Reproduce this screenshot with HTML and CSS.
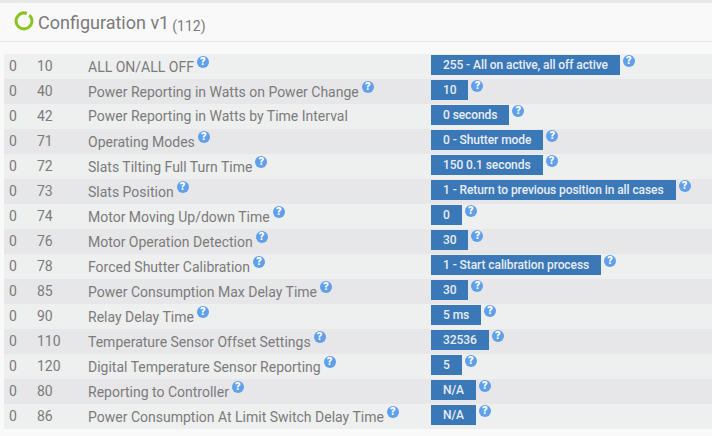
FILE: index.html
```html
<!DOCTYPE html>
<html lang="en">
<head>
    <meta charset="UTF-8">
    <meta name="viewport" content="width=device-width, initial-scale=1.0">
    <title>Configuration v1</title>
    <link rel="stylesheet" href="styles.css">
</head>
<body>
    <div class="topbar"></div>
    <div class="header">
        <svg class="ring" width="20" height="20" viewBox="0 0 20 20">
            <circle cx="10" cy="10" r="8" fill="none" stroke="#8cc320" stroke-width="3" stroke-dasharray="47 3.3" transform="rotate(-48 10 10)"/>
        </svg>
        <h1 class="title">Configuration v1</h1>
        <small class="count">(112)</small>
    </div>

    <table class="params">
        <tr><td class="c-ep">0</td><td class="c-id">10</td><td class="c-name">ALL ON/ALL OFF<span class="help">?</span></td><td class="c-val"><span class="badge">255 - All on active, all off active</span><span class="help">?</span></td></tr>
        <tr><td class="c-ep">0</td><td class="c-id">40</td><td class="c-name">Power Reporting in Watts on Power Change<span class="help">?</span></td><td class="c-val"><span class="badge">10</span><span class="help">?</span></td></tr>
        <tr><td class="c-ep">0</td><td class="c-id">42</td><td class="c-name">Power Reporting in Watts by Time Interval</td><td class="c-val"><span class="badge">0 seconds</span><span class="help">?</span></td></tr>
        <tr><td class="c-ep">0</td><td class="c-id">71</td><td class="c-name">Operating Modes<span class="help">?</span></td><td class="c-val"><span class="badge">0 - Shutter mode</span><span class="help">?</span></td></tr>
        <tr><td class="c-ep">0</td><td class="c-id">72</td><td class="c-name">Slats Tilting Full Turn Time<span class="help">?</span></td><td class="c-val"><span class="badge">150 0.1 seconds</span><span class="help">?</span></td></tr>
        <tr><td class="c-ep">0</td><td class="c-id">73</td><td class="c-name">Slats Position<span class="help">?</span></td><td class="c-val"><span class="badge">1 - Return to previous position in all cases</span><span class="help">?</span></td></tr>
        <tr><td class="c-ep">0</td><td class="c-id">74</td><td class="c-name">Motor Moving Up/down Time<span class="help">?</span></td><td class="c-val"><span class="badge">0</span><span class="help">?</span></td></tr>
        <tr><td class="c-ep">0</td><td class="c-id">76</td><td class="c-name">Motor Operation Detection<span class="help">?</span></td><td class="c-val"><span class="badge">30</span><span class="help">?</span></td></tr>
        <tr><td class="c-ep">0</td><td class="c-id">78</td><td class="c-name">Forced Shutter Calibration<span class="help">?</span></td><td class="c-val"><span class="badge">1 - Start calibration process</span><span class="help">?</span></td></tr>
        <tr><td class="c-ep">0</td><td class="c-id">85</td><td class="c-name">Power Consumption Max Delay Time<span class="help">?</span></td><td class="c-val"><span class="badge">30</span><span class="help">?</span></td></tr>
        <tr><td class="c-ep">0</td><td class="c-id">90</td><td class="c-name">Relay Delay Time<span class="help">?</span></td><td class="c-val"><span class="badge">5 ms</span><span class="help">?</span></td></tr>
        <tr><td class="c-ep">0</td><td class="c-id">110</td><td class="c-name">Temperature Sensor Offset Settings<span class="help">?</span></td><td class="c-val"><span class="badge">32536</span><span class="help">?</span></td></tr>
        <tr><td class="c-ep">0</td><td class="c-id">120</td><td class="c-name">Digital Temperature Sensor Reporting<span class="help">?</span></td><td class="c-val"><span class="badge">5</span><span class="help">?</span></td></tr>
        <tr><td class="c-ep">0</td><td class="c-id">80</td><td class="c-name">Reporting to Controller<span class="help">?</span></td><td class="c-val"><span class="badge">N/A</span><span class="help">?</span></td></tr>
        <tr><td class="c-ep">0</td><td class="c-id">86</td><td class="c-name">Power Consumption At Limit Switch Delay Time<span class="help">?</span></td><td class="c-val"><span class="badge">N/A</span><span class="help">?</span></td></tr>
    </table>
</body>
</html>
```

FILE: styles.css
```css
body {
    margin: 0;
    background-color: #f9f9f9;
    font-family: Roboto, "Liberation Sans", sans-serif;
    color: #7b7b7b;
    overflow: hidden;
}
.topbar {
    height: 3px;
    background-color: #e8e8e8;
}
.header {
    display: flex;
    align-items: center;
    height: 36px;
    padding: 0 0 2px 14px;
    border-bottom: 1px solid #e5e5e5;
}
.ring {
    margin-right: 4px;
}
.title {
    margin: 2px 0 0;
    font-size: 18px;
    font-weight: 400;
    color: #7b7b7b;
}
.count {
    margin: 10px 0 0 3px;
    font-size: 14px;
    color: #7b7b7b;
}
.params {
    width: 708px;
    margin: 12px 0 0 4px;
    border-collapse: collapse;
    font-size: 14px;
}
.params tr {
    height: 25px;
}
.params tr:nth-child(odd) {
    background-color: #eeefef;
}
.params tr:nth-child(even) {
    background-color: #e7e7e9;
}
.params td {
    padding: 0 0 2px;
    white-space: nowrap;
}
.params .c-ep {
    width: 28px;
    padding-left: 5px;
}
.c-id {
    width: 51px;
}
.c-name {
    width: 343px;
}
.params .c-val {
    padding: 1px 0 0;
    vertical-align: top;
}
.badge {
    display: inline-block;
    height: 20px;
    padding: 0 12px;
    background-color: #3b78b7;
    color: #e9eef5;
    font-size: 12px;
    font-weight: 500;
    letter-spacing: -0.08px;
    line-height: 20px;
    vertical-align: top;
}
.help {
    display: inline-block;
    width: 12px;
    height: 12px;
    margin-left: 3px;
    border-radius: 50%;
    background-color: #609fe9;
    color: #fff;
    font-size: 11px;
    font-weight: 900;
    line-height: 12px;
    text-align: center;
    vertical-align: 7px;
}
.c-val .help {
    vertical-align: top;
}
```
